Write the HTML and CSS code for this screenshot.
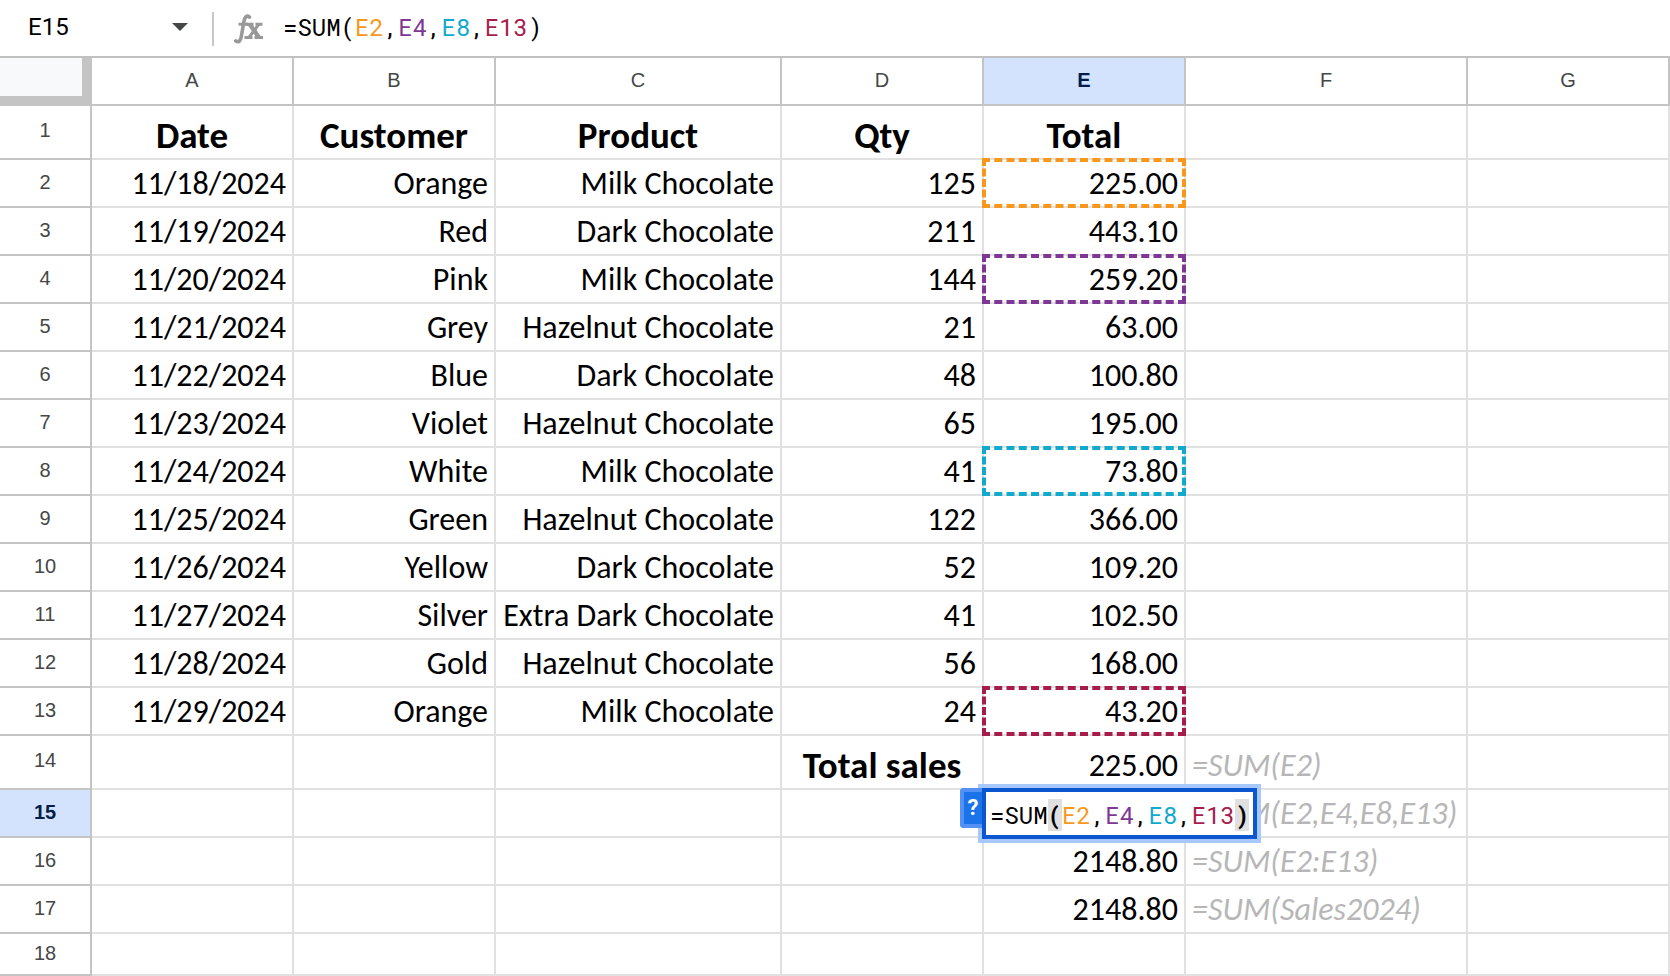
FILE: index.html
```html
<!DOCTYPE html>
<html lang="en">
<head>
<meta charset="utf-8">
<title>Sales sheet</title>
<link rel="stylesheet" href="styles.css">
</head>
<body>
<header class="formula-bar">
  <button class="name-box" type="button" aria-label="Name box"><span>E15</span>
    <svg class="caret" viewBox="0 0 16 8" aria-hidden="true"><path d="M0 0h16L8 8z" fill="#444746"/></svg>
  </button>
  <span class="divider"></span>
  <svg class="fx" viewBox="0 0 30 30" fill="none" stroke="#999" aria-hidden="true">
    <path stroke-width="3.6" stroke-linecap="round" d="M15.500 3.200C12.600.8 10.600 3 9.800 8L7.200 23C6.500 27 4.500 29 1.800 26.800"/>
    <path stroke-width="3" d="M4.500 10.200H14"/>
    <path stroke-width="4.400" d="M15.500 10L25 23.500"/>
    <path stroke-width="3" d="M25 10L15 23.500"/>
    <path stroke-width="3" d="M12 10.200H19.500M21.500 10.200H28.500M10.500 23.500H18.500M20.500 23.500H29"/>
  </svg>
  <div class="formula" role="textbox" contenteditable="true" spellcheck="false" aria-label="Formula">=SUM(<span class="c1">E2</span>,<span class="c2">E4</span>,<span class="c3">E8</span>,<span class="c4">E13</span>)</div>
</header>
<table class="sheet">
  <colgroup><col class="w-head"><col class="w-std"><col class="w-std"><col class="w-product"><col class="w-std"><col class="w-std"><col class="w-note"><col></colgroup>
  <thead>
    <tr><th class="corner"></th><th>A</th><th>B</th><th>C</th><th>D</th><th class="active">E</th><th>F</th><th>G</th></tr>
  </thead>
  <tbody>
    <tr class="tall titles"><th>1</th><td>Date</td><td>Customer</td><td>Product</td><td>Qty</td><td>Total</td><td></td><td></td></tr>
    <tr><th>2</th><td>11/18/2024</td><td>Orange</td><td>Milk Chocolate</td><td>125</td><td class="ref c1">225.00</td><td></td><td></td></tr>
    <tr><th>3</th><td>11/19/2024</td><td>Red</td><td>Dark Chocolate</td><td>211</td><td>443.10</td><td></td><td></td></tr>
    <tr><th>4</th><td>11/20/2024</td><td>Pink</td><td>Milk Chocolate</td><td>144</td><td class="ref c2">259.20</td><td></td><td></td></tr>
    <tr><th>5</th><td>11/21/2024</td><td>Grey</td><td>Hazelnut Chocolate</td><td>21</td><td>63.00</td><td></td><td></td></tr>
    <tr><th>6</th><td>11/22/2024</td><td>Blue</td><td>Dark Chocolate</td><td>48</td><td>100.80</td><td></td><td></td></tr>
    <tr><th>7</th><td>11/23/2024</td><td>Violet</td><td>Hazelnut Chocolate</td><td>65</td><td>195.00</td><td></td><td></td></tr>
    <tr><th>8</th><td>11/24/2024</td><td>White</td><td>Milk Chocolate</td><td>41</td><td class="ref c3">73.80</td><td></td><td></td></tr>
    <tr><th>9</th><td>11/25/2024</td><td>Green</td><td>Hazelnut Chocolate</td><td>122</td><td>366.00</td><td></td><td></td></tr>
    <tr><th>10</th><td>11/26/2024</td><td>Yellow</td><td>Dark Chocolate</td><td>52</td><td>109.20</td><td></td><td></td></tr>
    <tr><th>11</th><td>11/27/2024</td><td>Silver</td><td>Extra Dark Chocolate</td><td>41</td><td>102.50</td><td></td><td></td></tr>
    <tr><th>12</th><td>11/28/2024</td><td>Gold</td><td>Hazelnut Chocolate</td><td>56</td><td>168.00</td><td></td><td></td></tr>
    <tr><th>13</th><td>11/29/2024</td><td>Orange</td><td>Milk Chocolate</td><td>24</td><td class="ref c4">43.20</td><td></td><td></td></tr>
    <tr class="tall"><th>14</th><td></td><td></td><td></td><td class="label">Total sales</td><td>225.00</td><td class="note">=SUM(E2)</td><td></td></tr>
    <tr><th class="active">15</th><td></td><td></td><td></td><td></td>
      <td class="editing">
        <button class="help" type="button" aria-label="Formula help">?</button>
        <div class="editor" role="textbox" contenteditable="true" spellcheck="false" aria-label="Cell E15">=SUM<span class="paren">(</span><span class="c1">E2</span>,<span class="c2">E4</span>,<span class="c3">E8</span>,<span class="c4">E13</span><span class="paren">)</span></div>
      </td><td class="note">=SUM(E2,E4,E8,E13)</td><td></td></tr>
    <tr><th>16</th><td></td><td></td><td></td><td></td><td>2148.80</td><td class="note">=SUM(E2:E13)</td><td></td></tr>
    <tr><th>17</th><td></td><td></td><td></td><td></td><td>2148.80</td><td class="note">=SUM(Sales2024)</td><td></td></tr>
    <tr class="short"><th>18</th><td></td><td></td><td></td><td></td><td></td><td></td><td></td></tr>
  </tbody>
</table>
</body>
</html>
```
FILE: styles.css
```css
* { box-sizing: border-box; }
body { margin: 0; background: #fff; color: #000; font-family: Carlito, Lato, sans-serif; }
button { border: 0; padding: 0; background: none; color: inherit; cursor: pointer; }

.c1 { color: #f7981d; }
.c2 { color: #7e3794; }
.c3 { color: #11a9cc; }
.c4 { color: #a61d4c; }

.formula-bar { display: flex; align-items: center; height: 58px; padding-bottom: 2px; border-bottom: 2px solid #c0c0c0; }
.name-box { display: flex; align-items: center; justify-content: space-between; width: 212px; padding: 0 24px 0 28px; font: 24px/32px Roboto, sans-serif; }
.caret { width: 16px; height: 8px; }
.divider { width: 2px; height: 34px; margin-top: 4px; background: #c7c7c7; }
.fx { width: 30px; height: 30px; margin: 4px 19px 0 20px; }
.formula { flex: 1; font: 24px/32px "Roboto Mono", "DejaVu Sans Mono", monospace; outline: 0; }

.sheet { width: 100%; table-layout: fixed; border-collapse: separate; border-spacing: 0; }
.w-head { width: 92px; }
.w-std { width: 202px; }
.w-product { width: 286px; }
.w-note { width: 282px; }

.sheet th { height: 48px; padding: 0 0 2px; border: solid #c4c4c4; border-width: 0 2px 2px 0; font: 20px/24px "Liberation Sans", Arial, sans-serif; color: #444746; }
.sheet .corner { background: #f8f9fa; box-shadow: inset -8px -8px #c4c4c4; }
.sheet th.active { background: #d3e3fd; color: #041e49; font-weight: 700; }
.sheet td { position: relative; padding: 2px 6px 0; border: solid #e1e1e1; border-width: 0 2px 2px 0; font-size: 32px; line-height: 40px; text-align: right; white-space: nowrap; }
.sheet .tall th { height: 54px; padding-bottom: 4px; }
.sheet .tall td { padding-top: 8px; }
.sheet .short th { height: 42px; }
.sheet .short td { padding: 0; line-height: 36px; }
.sheet .titles td, .sheet .label { font-size: 37px; font-weight: 700; text-align: center; }
.sheet .note { color: #b7b7b7; font-style: italic; text-align: left; }

.sheet .ref { color: #000; }
.ref::after { content: ""; position: absolute; inset: -2px; border: 4px dashed; }
.ref.c1::after { border-color: #f7981d; }
.ref.c2::after { border-color: #7e3794; }
.ref.c3::after { border-color: #11a9cc; }
.ref.c4::after { border-color: #a61d4c; }

.sheet .editing { z-index: 1; }
.help { position: absolute; z-index: 1; right: calc(100% + 2px); top: -2px; width: 22px; height: 40px; border: 4px solid #5491f5; border-right: 0; border-radius: 4px 0 0 4px; background: #1a73e8; color: #fff; font: 700 22px/32px Roboto, sans-serif; }
.editor { position: absolute; left: -2px; top: -2px; padding: 8px 4px 5px; border: 4px solid #0b57d0; outline: 4px solid #a8c7fa; background: #fff; font: 24px/30px "Roboto Mono", "DejaVu Sans Mono", monospace; }
.paren { background: #e0e0e0; font-weight: 700; }
```
